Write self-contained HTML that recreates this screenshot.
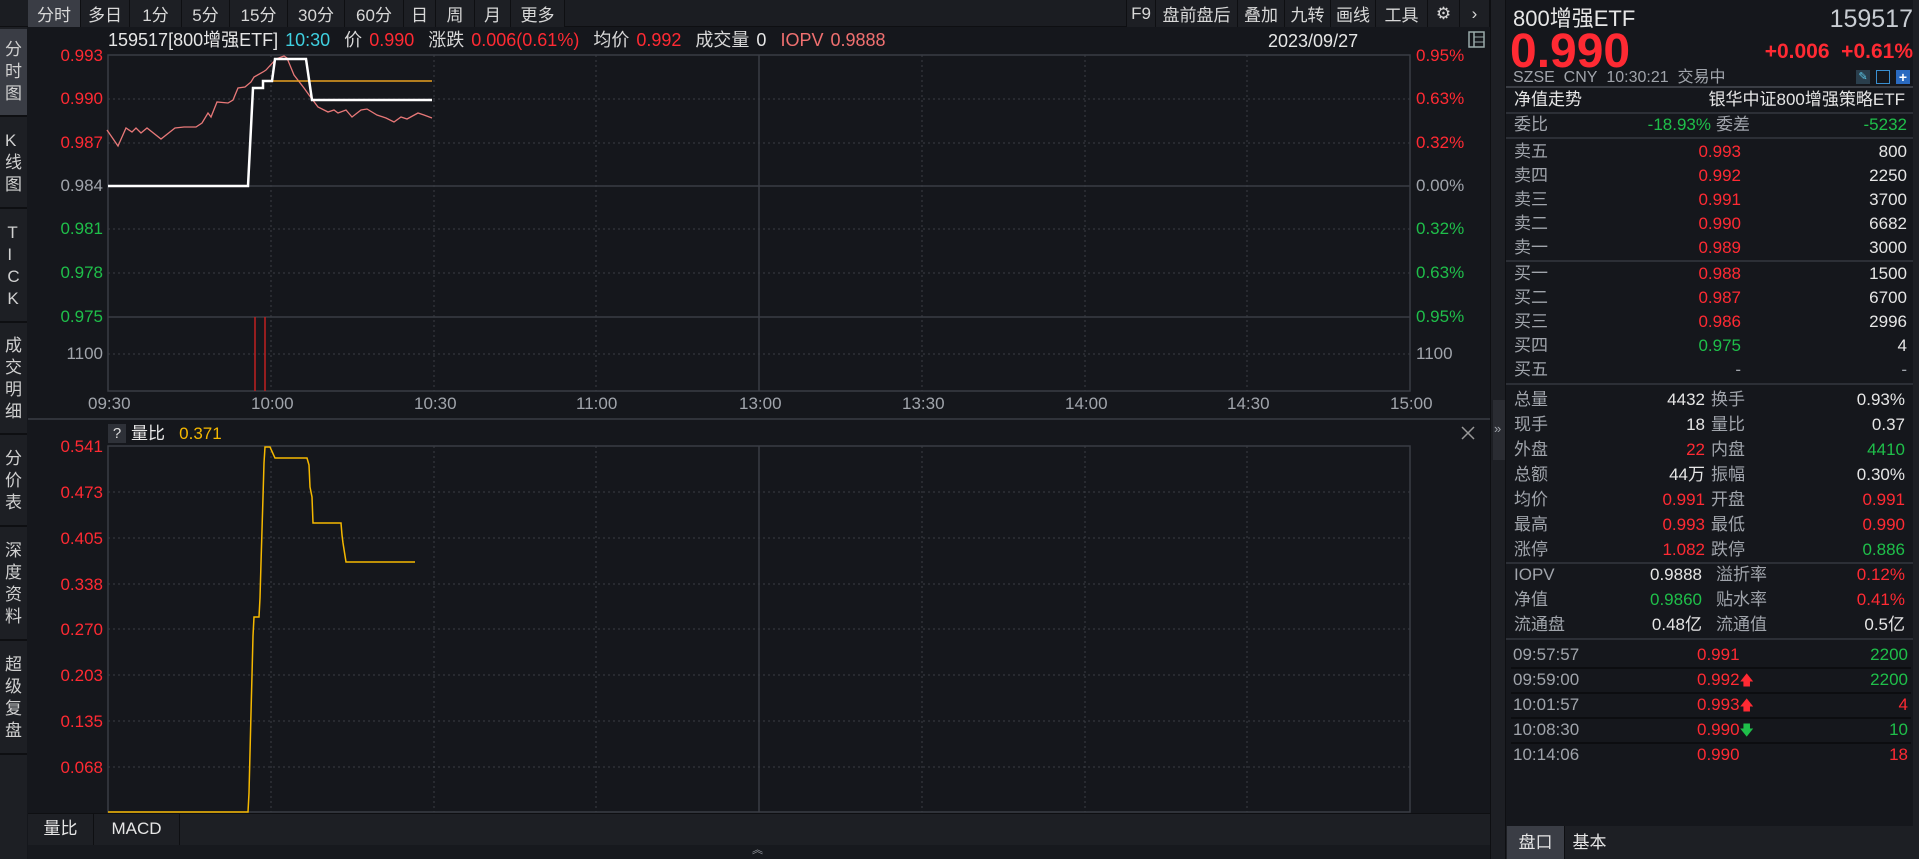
<!DOCTYPE html>
<html><head><meta charset="utf-8">
<style>
*{margin:0;padding:0;box-sizing:border-box}
body{width:1919px;height:859px;background:#15171c;overflow:hidden;position:relative;font-family:"Liberation Sans","Noto Sans CJK SC",sans-serif;color:#d8d8d8;font-size:16px}
.a{position:absolute;white-space:nowrap;line-height:1}
.ax{font-family:"Liberation Sans Narrow","Liberation Sans",sans-serif;font-size:17px}
.r{color:#ff2a33}.g{color:#1fbf4a}.w{color:#e6e6e6}.gr{color:#a0a4ab}
.tb{position:absolute;top:0;height:27px;background:#1d1f24;border-right:1px solid #0e0f12;display:flex;align-items:center;justify-content:center;font-size:17px;color:#d8d8d8}
.side{position:absolute;left:0;width:27px;background:#1d1f24;border-bottom:2px solid #0e0f12;display:flex;flex-direction:column;align-items:center;justify-content:center;font-size:17px;line-height:22px;color:#d0d0d0}
.row{position:absolute;left:1506px;width:407px;height:24px;font-size:17px;line-height:24px}
.row span{position:absolute;top:0}
.sep{position:absolute;left:1506px;width:407px;height:2px;background:#2c2f36}
</style></head><body>
<div class="a" style="left:0;top:0;width:1490px;height:27px;background:#1b1d22;border-bottom:1px solid #0e0f12"></div>
<div class="tb" style="left:28px;width:53px;background:#3a3d45">分时</div>
<div class="tb" style="left:81px;width:49px">多日</div>
<div class="tb" style="left:130px;width:52px">1分</div>
<div class="tb" style="left:182px;width:48px">5分</div>
<div class="tb" style="left:230px;width:58px">15分</div>
<div class="tb" style="left:288px;width:57px">30分</div>
<div class="tb" style="left:345px;width:59px">60分</div>
<div class="tb" style="left:404px;width:32px">日</div>
<div class="tb" style="left:436px;width:39px">周</div>
<div class="tb" style="left:475px;width:36px">月</div>
<div class="tb" style="left:511px;width:54px">更多</div>
<div class="tb" style="left:1126px;width:30px;border-left:1px solid #0e0f12">F9</div>
<div class="tb" style="left:1156px;width:82px">盘前盘后</div>
<div class="tb" style="left:1238px;width:47px">叠加</div>
<div class="tb" style="left:1285px;width:46px">九转</div>
<div class="tb" style="left:1331px;width:45px">画线</div>
<div class="tb" style="left:1376px;width:52px">工具</div>
<div class="tb" style="left:1428px;width:32px">⚙</div>
<div class="tb" style="left:1460px;width:30px">›</div>
<div class="a" style="left:0;top:27px;width:27px;height:832px;background:#1d1f24"></div>
<div class="side" style="top:29px;height:88px;background:#3a3d45">分<br>时<br>图</div>
<div class="side" style="top:119px;height:90px">K<br>线<br>图</div>
<div class="side" style="top:211px;height:112px">T<br>I<br>C<br>K</div>
<div class="side" style="top:325px;height:110px">成<br>交<br>明<br>细</div>
<div class="side" style="top:437px;height:90px">分<br>价<br>表</div>
<div class="side" style="top:529px;height:112px">深<br>度<br>资<br>料</div>
<div class="side" style="top:643px;height:112px">超<br>级<br>复<br>盘</div>
<div class="a" style="left:108px;top:31px;font-size:18px;word-spacing:2px"><span class="w">159517[800增强ETF]</span> <span style="color:#3fd0e0">10:30</span>&nbsp;&nbsp;价 <span class="r">0.990</span>&nbsp;&nbsp;涨跌 <span class="r">0.006(0.61%)</span>&nbsp;&nbsp;均价 <span class="r">0.992</span>&nbsp;&nbsp;成交量 <span class="w">0</span>&nbsp;&nbsp;<span style="color:#f07070">IOPV 0.9888</span></div>
<div class="a w" style="left:1268px;top:32px;font-size:18px">2023/09/27</div>
<svg class="a" style="left:1468px;top:31px" width="18" height="18"><rect x="1" y="1" width="15" height="15" fill="none" stroke="#9aa" stroke-width="1.5"/><line x1="6" y1="1" x2="6" y2="16" stroke="#9aa" stroke-width="1.5"/><line x1="6" y1="6" x2="16" y2="6" stroke="#9aa"/><line x1="6" y1="11" x2="16" y2="11" stroke="#9aa"/></svg>
<svg class="a" style="left:0;top:0" width="1490" height="859">
<g stroke="#3a3d44" stroke-dasharray="2,3" stroke-width="1">
<line x1="108" y1="99" x2="1410" y2="99"/><line x1="108" y1="143" x2="1410" y2="143"/><line x1="108" y1="229" x2="1410" y2="229"/><line x1="108" y1="273" x2="1410" y2="273"/><line x1="108" y1="354" x2="1410" y2="354"/>
<line x1="271" y1="55" x2="271" y2="391"/><line x1="434" y1="55" x2="434" y2="391"/><line x1="596" y1="55" x2="596" y2="391"/><line x1="922" y1="55" x2="922" y2="391"/><line x1="1085" y1="55" x2="1085" y2="391"/><line x1="1247" y1="55" x2="1247" y2="391"/>
<line x1="108" y1="492" x2="1410" y2="492"/><line x1="108" y1="538" x2="1410" y2="538"/><line x1="108" y1="584" x2="1410" y2="584"/><line x1="108" y1="629" x2="1410" y2="629"/><line x1="108" y1="675" x2="1410" y2="675"/><line x1="108" y1="721" x2="1410" y2="721"/><line x1="108" y1="767" x2="1410" y2="767"/>
<line x1="271" y1="446" x2="271" y2="812"/><line x1="434" y1="446" x2="434" y2="812"/><line x1="596" y1="446" x2="596" y2="812"/><line x1="922" y1="446" x2="922" y2="812"/><line x1="1085" y1="446" x2="1085" y2="812"/><line x1="1247" y1="446" x2="1247" y2="812"/>
</g>
<g stroke="#3a3d44" stroke-width="1.5" fill="none">
<rect x="108" y="55" width="1302" height="336"/>
<line x1="108" y1="186" x2="1410" y2="186"/><line x1="108" y1="317" x2="1410" y2="317"/>
<line x1="759" y1="55" x2="759" y2="391"/><line x1="759" y1="446" x2="759" y2="812"/>
<rect x="108" y="446" width="1302" height="366"/>
<line x1="28" y1="419" x2="1490" y2="419"/>
</g>
<line x1="255" y1="317" x2="255" y2="391" stroke="#c02020" stroke-width="1.5"/>
<line x1="265" y1="317" x2="265" y2="391" stroke="#c02020" stroke-width="1.5"/>
<polyline fill="none" stroke="#e87878" stroke-width="1.3" points="107,130 118,146 126,128 132,132 136,128 141,133 147,128 161,139 175,128 184,127 196,127 202,123 208,113 211,117 217,102 228,103 233,100 238,88 245,87 251,82 254,77 263,72 266,70 276,59 284,56 287,58 294,75 304,88 309,95 318,107 328,112 334,110 338,113 346,110 352,117 361,110 367,109 377,115 386,118 394,122 401,117 407,119 418,113 424,115 432,118"/>
<polyline fill="none" stroke="#e8a020" stroke-width="1.5" points="263,81 432,81"/>
<polyline fill="none" stroke="#ffffff" stroke-width="2.5" points="108,186 248,186 253,88 263,88 263,81 272,81 275,59 306,59 312,100 432,100"/>
<polyline fill="none" stroke="#f5b800" stroke-width="1.5" points="108,812 248,812 249,793 250,753 251,713 252,675 253,636 254,617 259,617 260,598 261,563 262,530 263,497 264,463 265,447 270,447 275,458 307,458 309,465 310,487 312,497 313,523 341,523 342,535 343,543 346,562 415,562"/>
<line x1="1462" y1="427" x2="1474" y2="439" stroke="#999" stroke-width="1.5"/><line x1="1474" y1="427" x2="1462" y2="439" stroke="#999" stroke-width="1.5"/>
</svg>
<div class="a ax r" style="right:1816px;top:47px">0.993</div>
<div class="a ax r" style="right:1816px;top:90px">0.990</div>
<div class="a ax r" style="right:1816px;top:134px">0.987</div>
<div class="a ax gr" style="right:1816px;top:177px">0.984</div>
<div class="a ax g" style="right:1816px;top:220px">0.981</div>
<div class="a ax g" style="right:1816px;top:264px">0.978</div>
<div class="a ax g" style="right:1816px;top:308px">0.975</div>
<div class="a ax gr" style="right:1816px;top:345px">1100</div>
<div class="a ax r" style="left:1416px;top:47px">0.95%</div>
<div class="a ax r" style="left:1416px;top:90px">0.63%</div>
<div class="a ax r" style="left:1416px;top:134px">0.32%</div>
<div class="a ax gr" style="left:1416px;top:177px">0.00%</div>
<div class="a ax g" style="left:1416px;top:220px">0.32%</div>
<div class="a ax g" style="left:1416px;top:264px">0.63%</div>
<div class="a ax g" style="left:1416px;top:308px">0.95%</div>
<div class="a ax gr" style="left:1416px;top:345px">1100</div>
<div class="a ax gr" style="left:88px;top:395px">09:30</div>
<div class="a ax gr" style="left:251px;top:395px">10:00</div>
<div class="a ax gr" style="left:414px;top:395px">10:30</div>
<div class="a ax gr" style="left:576px;top:395px">11:00</div>
<div class="a ax gr" style="left:739px;top:395px">13:00</div>
<div class="a ax gr" style="left:902px;top:395px">13:30</div>
<div class="a ax gr" style="left:1065px;top:395px">14:00</div>
<div class="a ax gr" style="left:1227px;top:395px">14:30</div>
<div class="a ax gr" style="left:1390px;top:395px">15:00</div>
<div class="a" style="left:108px;top:424px;width:18px;height:19px;background:#2e3138;color:#ddd;text-align:center;line-height:19px;font-size:15px">?</div>
<div class="a w" style="left:131px;top:425px;font-size:17px">量比&nbsp;&nbsp; <span style="color:#f5b800">0.371</span></div>
<div class="a ax r" style="right:1816px;top:438px">0.541</div>
<div class="a ax r" style="right:1816px;top:484px">0.473</div>
<div class="a ax r" style="right:1816px;top:530px">0.405</div>
<div class="a ax r" style="right:1816px;top:576px">0.338</div>
<div class="a ax r" style="right:1816px;top:621px">0.270</div>
<div class="a ax r" style="right:1816px;top:667px">0.203</div>
<div class="a ax r" style="right:1816px;top:713px">0.135</div>
<div class="a ax r" style="right:1816px;top:759px">0.068</div>
<div class="a" style="left:28px;top:813px;width:1462px;height:32px;background:#1d1f24;border-top:1px solid #0e0f12"></div>
<div class="a w" style="left:28px;top:813px;width:66px;height:32px;line-height:32px;text-align:center;border-right:1px solid #0e0f12;font-size:17px">量比</div>
<div class="a w" style="left:94px;top:813px;width:86px;height:32px;line-height:32px;text-align:center;border-right:1px solid #0e0f12;font-size:17px">MACD</div>
<div class="a" style="left:28px;top:845px;width:1462px;height:14px;background:#17191e"></div>
<div class="a gr" style="left:752px;top:845px;font-size:11px">︽</div>
<div class="a" style="left:1490px;top:0;width:16px;height:859px;background:#1d1f24;border-left:1px solid #0e0f12;border-right:1px solid #0e0f12"></div>
<div class="a" style="left:1493px;top:400px;width:12px;height:60px;background:#2a2c32"></div>
<div class="a gr" style="left:1494px;top:422px;font-size:13px">»</div>
<div class="a w" style="left:1513px;top:8px;font-size:22px">800增强ETF</div>
<div class="a" style="right:6px;top:7px;font-size:25px;color:#c8ccd2">159517</div>
<div class="a r" style="left:1510px;top:28px;font-size:48px;font-weight:bold">0.990</div>
<div class="a r" style="right:6px;top:41px;font-size:21px;font-weight:bold">+0.006&nbsp; +0.61%</div>
<div class="a gr" style="left:1513px;top:70px;font-size:16px">SZSE&nbsp; CNY&nbsp; 10:30:21&nbsp; 交易中</div>
<div class="a" style="left:1856px;top:70px;width:14px;height:14px;background:#2a3e4c;color:#5cc8e8;font-size:11px;text-align:center;line-height:14px">✎</div>
<div class="a" style="left:1876px;top:70px;width:14px;height:14px;border:1px solid #3a8fd0"></div>
<div class="a" style="left:1896px;top:70px;width:14px;height:14px;background:#2a6ac0;color:#fff;font-size:14px;text-align:center;line-height:14px;font-weight:bold">+</div>
<div class="sep" style="top:86px;background:#3a3d44"></div>
<div class="row" style="top:88px"><span class="w" style="left:8px">净值走势</span><span class="w" style="right:8px">银华中证800增强策略ETF</span></div>
<div class="sep" style="top:112px"></div>
<div class="row" style="top:113px"><span class="gr" style="left:8px">委比</span><span class="g" style="right:202px">-18.93%</span><span class="gr" style="left:210px">委差</span><span class="g" style="right:6px">-5232</span></div>
<div class="sep" style="top:137px"></div>
<div class="row" style="top:140px"><span class="gr" style="left:8px">卖五</span><span class="r" style="right:172px">0.993</span><span class="w" style="right:6px">800</span></div>
<div class="row" style="top:164px"><span class="gr" style="left:8px">卖四</span><span class="r" style="right:172px">0.992</span><span class="w" style="right:6px">2250</span></div>
<div class="row" style="top:188px"><span class="gr" style="left:8px">卖三</span><span class="r" style="right:172px">0.991</span><span class="w" style="right:6px">3700</span></div>
<div class="row" style="top:212px"><span class="gr" style="left:8px">卖二</span><span class="r" style="right:172px">0.990</span><span class="w" style="right:6px">6682</span></div>
<div class="row" style="top:236px"><span class="gr" style="left:8px">卖一</span><span class="r" style="right:172px">0.989</span><span class="w" style="right:6px">3000</span></div>
<div class="sep" style="top:260px"></div>
<div class="row" style="top:262px"><span class="gr" style="left:8px">买一</span><span class="r" style="right:172px">0.988</span><span class="w" style="right:6px">1500</span></div>
<div class="row" style="top:286px"><span class="gr" style="left:8px">买二</span><span class="r" style="right:172px">0.987</span><span class="w" style="right:6px">6700</span></div>
<div class="row" style="top:310px"><span class="gr" style="left:8px">买三</span><span class="r" style="right:172px">0.986</span><span class="w" style="right:6px">2996</span></div>
<div class="row" style="top:334px"><span class="gr" style="left:8px">买四</span><span class="g" style="right:172px">0.975</span><span class="w" style="right:6px">4</span></div>
<div class="row" style="top:358px"><span class="gr" style="left:8px">买五</span><span class="gr" style="right:172px">-</span><span class="gr" style="right:6px">-</span></div>
<div class="sep" style="top:383px"></div>
<div class="row" style="top:388px"><span class="gr" style="left:8px">总量</span><span class="w" style="right:208px">4432</span><span class="gr" style="left:205px">换手</span><span class="w" style="right:8px">0.93%</span></div>
<div class="row" style="top:413px"><span class="gr" style="left:8px">现手</span><span class="w" style="right:208px">18</span><span class="gr" style="left:205px">量比</span><span class="w" style="right:8px">0.37</span></div>
<div class="row" style="top:438px"><span class="gr" style="left:8px">外盘</span><span class="r" style="right:208px">22</span><span class="gr" style="left:205px">内盘</span><span class="g" style="right:8px">4410</span></div>
<div class="row" style="top:463px"><span class="gr" style="left:8px">总额</span><span class="w" style="right:208px">44万</span><span class="gr" style="left:205px">振幅</span><span class="w" style="right:8px">0.30%</span></div>
<div class="row" style="top:488px"><span class="gr" style="left:8px">均价</span><span class="r" style="right:208px">0.991</span><span class="gr" style="left:205px">开盘</span><span class="r" style="right:8px">0.991</span></div>
<div class="row" style="top:513px"><span class="gr" style="left:8px">最高</span><span class="r" style="right:208px">0.993</span><span class="gr" style="left:205px">最低</span><span class="r" style="right:8px">0.990</span></div>
<div class="row" style="top:538px"><span class="gr" style="left:8px">涨停</span><span class="r" style="right:208px">1.082</span><span class="gr" style="left:205px">跌停</span><span class="g" style="right:8px">0.886</span></div>
<div class="sep" style="top:562px"></div>
<div class="row" style="top:563px"><span class="gr" style="left:8px">IOPV</span><span class="w" style="right:211px">0.9888</span><span class="gr" style="left:210px">溢折率</span><span class="r" style="right:8px">0.12%</span></div>
<div class="row" style="top:588px"><span class="gr" style="left:8px">净值</span><span class="g" style="right:211px">0.9860</span><span class="gr" style="left:210px">贴水率</span><span class="r" style="right:8px">0.41%</span></div>
<div class="row" style="top:613px"><span class="gr" style="left:8px">流通盘</span><span class="w" style="right:211px">0.48亿</span><span class="gr" style="left:210px">流通值</span><span class="w" style="right:8px">0.5亿</span></div>
<div class="sep" style="top:638px"></div>
<div class="row" style="top:643px"><span class="gr" style="left:7px">09:57:57</span><span class="r" style="left:191px">0.991</span><span class="g" style="right:5px">2200</span></div>
<div class="sep" style="top:667px;left:1511px;width:400px;background:#0c0d10"></div>
<div class="row" style="top:668px"><span class="gr" style="left:7px">09:59:00</span><span class="r" style="left:191px">0.992<small>🡅</small></span><span class="g" style="right:5px">2200</span></div>
<div class="sep" style="top:692px;left:1511px;width:400px;background:#0c0d10"></div>
<div class="row" style="top:693px"><span class="gr" style="left:7px">10:01:57</span><span class="r" style="left:191px">0.993<small>🡅</small></span><span class="r" style="right:5px">4</span></div>
<div class="sep" style="top:717px;left:1511px;width:400px;background:#0c0d10"></div>
<div class="row" style="top:718px"><span class="gr" style="left:7px">10:08:30</span><span class="r" style="left:191px">0.990<small class="g">🡇</small></span><span class="g" style="right:5px">10</span></div>
<div class="sep" style="top:742px;left:1511px;width:400px;background:#0c0d10"></div>
<div class="row" style="top:743px"><span class="gr" style="left:7px">10:14:06</span><span class="r" style="left:191px">0.990</span><span class="r" style="right:5px">18</span></div>
<div class="a" style="left:1506px;top:826px;width:407px;height:33px;background:#1d1f24"></div>
<div class="a w" style="left:1507px;top:826px;width:57px;height:33px;background:#3a3d45;line-height:33px;text-align:center;font-size:17px">盘口</div>
<div class="a w" style="left:1564px;top:826px;width:50px;height:33px;line-height:33px;text-align:center;font-size:17px;border-left:1px solid #0e0f12">基本</div>
<div class="a" style="left:1913px;top:0;width:6px;height:859px;background:#1d1f24"></div>
</body></html>
